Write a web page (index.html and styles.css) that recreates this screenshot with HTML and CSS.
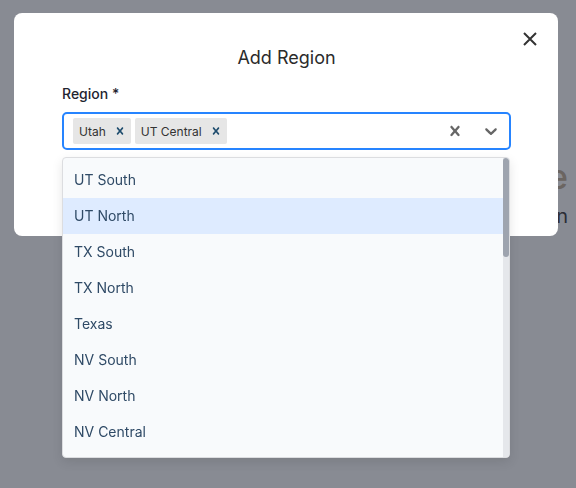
FILE: index.html
```html
<!DOCTYPE html>
<html lang="en">
<head>
<meta charset="UTF-8">
<meta name="viewport" content="width=device-width, initial-scale=1.0">
<title>Regions</title>
<link rel="stylesheet" href="styles.css">
</head>
<body>

<div class="page">
    <h1>Zone</h1>
    <p>Region</p>
</div>

<div class="overlay">
    <div class="modal">
        <button class="modal-close" type="button" aria-label="Close">
            <svg width="24" height="24" viewBox="0 0 24 24"><path d="M6 6l12 12M18 6L6 18" /></svg>
        </button>
        <h2 class="modal-title">Add Region</h2>

        <label class="field-label">Region *</label>
        <div class="select">
            <div class="select-control">
                <div class="select-values">
                    <div class="chip">
                        <span class="chip-label">Utah</span>
                        <span class="chip-remove"><svg width="14" height="14" viewBox="0 0 20 20"><path d="M14.348 14.849c-0.469 0.469-1.229 0.469-1.697 0l-2.651-3.030-2.651 3.029c-0.469 0.469-1.229 0.469-1.697 0-0.469-0.469-0.469-1.229 0-1.697l2.758-3.15-2.759-3.152c-0.469-0.469-0.469-1.228 0-1.697s1.228-0.469 1.697 0l2.652 3.031 2.651-3.031c0.469-0.469 1.228-0.469 1.697 0s0.469 1.229 0 1.697l-2.758 3.152 2.758 3.15c0.469 0.469 0.469 1.229 0 1.698z" /></svg></span>
                    </div>
                    <div class="chip">
                        <span class="chip-label">UT Central</span>
                        <span class="chip-remove"><svg width="14" height="14" viewBox="0 0 20 20"><path d="M14.348 14.849c-0.469 0.469-1.229 0.469-1.697 0l-2.651-3.030-2.651 3.029c-0.469 0.469-1.229 0.469-1.697 0-0.469-0.469-0.469-1.229 0-1.697l2.758-3.15-2.759-3.152c-0.469-0.469-0.469-1.228 0-1.697s1.228-0.469 1.697 0l2.652 3.031 2.651-3.031c0.469-0.469 1.228-0.469 1.697 0s0.469 1.229 0 1.697l-2.758 3.152 2.758 3.15c0.469 0.469 0.469 1.229 0 1.698z" /></svg></span>
                    </div>
                </div>
                <div class="select-indicator">
                    <svg width="20" height="20" viewBox="0 0 20 20"><path d="M14.348 14.849c-0.469 0.469-1.229 0.469-1.697 0l-2.651-3.030-2.651 3.029c-0.469 0.469-1.229 0.469-1.697 0-0.469-0.469-0.469-1.229 0-1.697l2.758-3.15-2.759-3.152c-0.469-0.469-0.469-1.228 0-1.697s1.228-0.469 1.697 0l2.652 3.031 2.651-3.031c0.469-0.469 1.228-0.469 1.697 0s0.469 1.229 0 1.697l-2.758 3.152 2.758 3.15c0.469 0.469 0.469 1.229 0 1.698z" /></svg>
                </div>
                <div class="select-indicator">
                    <svg width="20" height="20" viewBox="0 0 20 20"><path d="M4.516 7.548c0.436-0.446 1.043-0.481 1.576 0l3.908 3.747 3.908-3.747c0.533-0.481 1.141-0.446 1.574 0 0.436 0.445 0.408 1.197 0 1.615-0.406 0.418-4.695 4.502-4.695 4.502-0.217 0.223-0.502 0.335-0.787 0.335s-0.57-0.112-0.789-0.335c0 0-4.287-4.084-4.695-4.502s-0.436-1.17 0-1.615z" /></svg>
                </div>
            </div>

            <div class="select-menu">
                <ul class="menu-list">
                    <li class="option">UT South</li>
                    <li class="option focused">UT North</li>
                    <li class="option">TX South</li>
                    <li class="option">TX North</li>
                    <li class="option">Texas</li>
                    <li class="option">NV South</li>
                    <li class="option">NV North</li>
                    <li class="option">NV Central</li>
                </ul>
                <div class="scrollbar"><div class="scrollbar-thumb"></div></div>
            </div>
        </div>
    </div>
</div>

</body>
</html>
```

FILE: styles.css
```css
/* Base */
body {
    margin: 0;
    font-family: Inter, "Noto Sans", sans-serif;
    background-color: #fff;
    color: #333;
}

/* Page behind the dialog */
.page {
    padding: 157px 8px 0 0;
    text-align: right;
    white-space: nowrap;
}
.page h1 {
    margin: 0;
    font-size: 34px;
    line-height: 40px;
    font-weight: 500;
    color: #c5b29b;
}
.page p {
    margin: 5px 0 0;
    font-size: 20px;
    line-height: 28px;
    color: #454345;
}

/* Dialog */
.overlay {
    position: fixed;
    inset: 0;
    background-color: rgba(17, 24, 39, 0.5);
    padding: 13px 0 0 14px;
}
.modal {
    position: relative;
    box-sizing: border-box;
    width: 544px;
    height: 223px;
    padding: 33px 47px 0 48px;
    background-color: #fff;
    border-radius: 8px;
}
.modal-close {
    position: absolute;
    top: 14px;
    right: 16px;
    width: 24px;
    height: 24px;
    padding: 0;
    border: none;
    background: none;
    cursor: pointer;
}
.modal-close svg {
    display: block;
    fill: none;
    stroke: #333;
    stroke-width: 2;
}
.modal-title {
    margin: 0;
    text-align: center;
    font-size: 18px;
    line-height: 24px;
    font-weight: 400;
    color: #2b2b2b;
}
.field-label {
    display: block;
    margin-top: 14px;
    font-size: 14px;
    line-height: 20px;
    font-weight: 500;
    color: #1f2430;
}

/* Multi select */
.select {
    position: relative;
    margin-top: 8px;
}
.select-control {
    display: flex;
    align-items: center;
    box-sizing: border-box;
    height: 38px;
    border: 2px solid #2684ff;
    border-radius: 5px;
    background-color: #fff;
}
.select-values {
    flex: 1;
    display: flex;
    gap: 4px;
    padding: 0 7px 0 9px;
}
.chip {
    display: flex;
    align-items: center;
    height: 26px;
    background-color: #e6e6e6;
    border-radius: 2px;
}
.chip-label {
    padding: 0 3px 0 6px;
    font-size: 12px;
    color: #333;
}
.chip-remove {
    display: flex;
    padding: 0 4px;
}
.chip-remove svg {
    fill: #1f4d6e;
}
.select-indicator {
    display: flex;
    padding: 0 8px;
}
.select-indicator svg {
    fill: #666;
}

.select-menu {
    position: absolute;
    top: 45px;
    left: 0;
    right: 1px;
    display: flex;
    height: 301px;
    box-sizing: border-box;
    border: 1px solid #dcdde0;
    border-radius: 4px;
    background-color: #f8fafc;
    box-shadow: 0 4px 11px rgba(0, 0, 0, 0.1);
    overflow: hidden;
}
.menu-list {
    flex: 1;
    list-style: none;
    margin: 0;
    padding: 4px 0;
    overflow: hidden;
}
.option {
    padding: 0 11px;
    height: 36px;
    line-height: 36px;
    font-size: 14px;
    color: #2f4a66;
}
.option.focused {
    background-color: #deebff;
}
.scrollbar {
    width: 6px;
    background-color: #e5e7eb;
}
.scrollbar-thumb {
    height: 99px;
    background-color: #9ea4af;
    border-radius: 3px;
}
```
